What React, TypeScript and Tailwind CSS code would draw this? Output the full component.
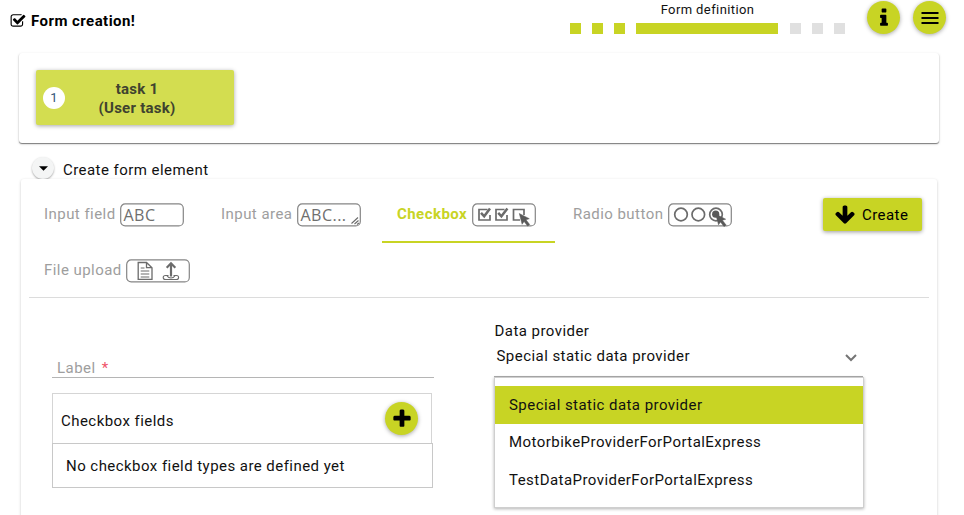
import type { ReactNode } from "react";

const PATHS = {
  check:
    "M1472 930v318q0 119-84.5 203.5t-203.5 84.5h-832q-119 0-203.5-84.5t-84.5-203.5v-832q0-119 84.5-203.5t203.5-84.5h832q63 0 117 25 15 7 18 23 3 17-9 29l-49 49q-10 10-23 10-3 0-9-2-23-6-45-6h-832q-66 0-113 47t-47 113v832q0 66 47 113t113 47h832q66 0 113-47t47-113v-254q0-13 9-22l64-64q10-10 23-10 6 0 12 3 20 8 20 29zm231-489l-814 814q-24 24-57 24t-57-24l-430-430q-24-24-24-57t24-57l110-110q24-24 57-24t57 24l263 263 647-647q24-24 57-24t57 24l110 110q24 24 24 57t-24 57z",
  plus: "M1600 736v192q0 40-28 68t-68 28h-416v416q0 40-28 68t-68 28h-192q-40 0-68-28t-28-68v-416h-416q-40 0-68-28t-28-68v-192q0-40 28-68t68-28h416v-416q0-40 28-68t68-28h192q40 0 68 28t28 68v416h416q40 0 68 28t28 68z",
  arrowDown:
    "M1675 832q0 53-37 90l-651 652q-39 37-91 37-53 0-90-37l-651-652q-38-36-38-90 0-53 38-91l74-75q39-37 91-37 53 0 90 37l294 294v-704q0-52 38-90t90-38h128q52 0 90 38t38 90v704l294-294q37-37 90-37 52 0 91 37l75 75q37 39 37 91z",
  info: "M1216 1344v128q0 26-19 45t-45 19h-512q-26 0-45-19t-19-45v-128q0-26 19-45t45-19h64v-384h-64q-26 0-45-19t-19-45v-128q0-26 19-45t45-19h384q26 0 45 19t19 45v576h64q26 0 45 19t19 45zm-128-1152v192q0 26-19 45t-45 19h-256q-26 0-45-19t-19-45v-192q0-26 19-45t45-19h256q26 0 45 19t19 45z",
};

function Glyph({ name, className }: { name: keyof typeof PATHS; className: string }) {
  return (
    <svg viewBox="0 0 1792 1792" fill="currentColor" className={className}>
      <path d={PATHS[name]} />
    </svg>
  );
}

function RoundButton({ children, className = "" }: { children: ReactNode; className?: string }) {
  return (
    <button
      className={`flex size-[33px] shrink-0 items-center justify-center rounded-full bg-[#c8d424] text-black shadow-[0_1px_4px_rgba(0,0,0,0.35)] ${className}`}
    >
      {children}
    </button>
  );
}

function Frame({ children }: { children?: ReactNode }) {
  return (
    <svg
      viewBox="0 0 64 24"
      fill="none"
      stroke="#6b6b6b"
      className="mt-px h-6 w-16 shrink-0"
      fontFamily="'Open Sans', 'Noto Sans', sans-serif"
    >
      <rect x="0.7" y="0.9" width="62.6" height="22" rx="4.5" strokeWidth="1.2" stroke="#858585" />
      {children}
    </svg>
  );
}

const CURSOR = "M0 0L10 5.2L6.7 6.3L10.4 11L8.3 12.6L4.8 7.9L2.8 10.8Z";

function InputIcon() {
  return (
    <Frame>
      <text x="3.5" y="17.8" fontSize="16.5" fill="#6f6f6f" stroke="none" textLength="32" lengthAdjust="spacingAndGlyphs">ABC</text>
    </Frame>
  );
}

function AreaIcon() {
  return (
    <Frame>
      <text x="3.5" y="17.8" fontSize="16.5" fill="#6f6f6f" stroke="none" textLength="46" lengthAdjust="spacingAndGlyphs">ABC...</text>
      <path d="M54.5 20.5L61 14.5M57.5 21L61.5 17.5M60 21.5L62 20" strokeWidth="1.1" />
    </Frame>
  );
}

function CheckboxIcon() {
  return (
    <Frame>
      <path d="M15.5 6.5H7V17H18V12M32.5 6.5H24V17H35V12M48 17H41.5V6.5H52V12" strokeWidth="1.7" />
      <path d="M9 9.8L12.2 13.3L18 5.5M26.2 9.8L29.4 13.3L35.4 5.5" strokeWidth="2.5" />
      <path d={CURSOR} transform="translate(47.3 10.5)" fill="#595959" stroke="#595959" strokeWidth="0.5" />
    </Frame>
  );
}

function RadioIcon() {
  return (
    <Frame>
      <circle cx="13" cy="11.5" r="6.3" strokeWidth="1.7" />
      <circle cx="30.3" cy="11.5" r="6.3" strokeWidth="1.7" />
      <circle cx="48" cy="11.5" r="6.3" strokeWidth="1.7" />
      <circle cx="47.7" cy="11.2" r="3.6" fill="#595959" stroke="none" />
      <path d={CURSOR} transform="translate(47.7 11)" fill="#595959" stroke="#595959" strokeWidth="0.5" />
    </Frame>
  );
}

function UploadIcon() {
  return (
    <Frame>
      <path d="M12.2 3.5H20.5L26 8.7V20.3H12.2ZM20.5 3.5V8.7H26" strokeWidth="1.3" />
      <path d="M14.7 9H18.5M14.7 12H23.3M14.7 15H23.3M14.7 18H23.3" strokeWidth="1.2" />
      <path d="M45 17.5V5.5M40.7 8.7L45 4.3L49.3 8.7" strokeWidth="2.2" />
      <path d="M42.5 16.5H39.5Q37.2 16.5 37.2 18.5Q37.2 20.5 39.5 20.5H50.5Q52.6 20.5 52.6 18.5Q52.6 16.5 50.5 16.5H47.5M41 16.7Q42.5 19 45 19Q47.5 19 49 16.7" strokeWidth="1.1" />
    </Frame>
  );
}

function Tab({ label, icon, active = false, className = "" }: { label: string; icon: ReactNode; active?: boolean; className?: string }) {
  return (
    <div
      className={`flex h-14 shrink-0 items-center border-b-2 whitespace-nowrap ${
        active ? "border-[#c8d424] font-bold text-[#c8d424]" : "border-transparent text-[#9e9e9e]"
      } ${className}`}
    >
      <span>{label}</span>
      {icon}
    </div>
  );
}

const options = ["Special static data provider", "MotorbikeProviderForPortalExpress", "TestDataProviderForPortalExpress"];

export default function App() {
  return (
    <div className="flex h-[515px] w-[964px] flex-col overflow-hidden bg-white font-['Roboto',sans-serif] text-[15px] leading-[19px] tracking-[0.45px] text-[#111]">
      <header className="flex h-[53px] shrink-0 items-start">
        <div className="flex w-[570px] items-center pt-3 pl-[10px] font-bold text-black">
          <Glyph name="check" className="mr-[5px] mb-px size-4" />
          Form creation!
        </div>
        <div className="flex w-[275px] flex-col items-center">
          <div className="h-[23px] text-[13px] tracking-[0.4px]">Form definition</div>
          <div className="flex w-full gap-[11px]">
            <i className="size-[11px] bg-[#c8d424]" />
            <i className="size-[11px] bg-[#c8d424]" />
            <i className="size-[11px] bg-[#c8d424]" />
            <i className="mr-px h-[11px] w-[142px] bg-[#c8d424]" />
            <i className="size-[11px] bg-[#e0e0e0]" />
            <i className="size-[11px] bg-[#e0e0e0]" />
            <i className="size-[11px] bg-[#e0e0e0]" />
          </div>
        </div>
        <div className="flex gap-[13px] pt-px pl-[22px]">
          <RoundButton>
            <Glyph name="info" className="size-[22px]" />
          </RoundButton>
          <RoundButton>
            <svg viewBox="0 0 18 12" className="h-3 w-[18px]" stroke="black" strokeWidth="1.8">
              <path d="M0.5 1H17.5M0.5 6H17.5M0.5 11H17.5" />
            </svg>
          </RoundButton>
        </div>
      </header>

      <section className="ml-[19px] h-[90px] w-[920px] shrink-0 rounded-[3px] bg-white pt-[17px] pl-[17px] shadow-[0_1px_1px_rgba(0,0,0,0.45),0_1px_3px_rgba(0,0,0,0.16)]">
        <div className="flex h-[55px] w-[198px] items-center rounded-[2px] bg-[#d3dd50] shadow-[0_1px_4px_rgba(0,0,0,0.35)]">
          <span className="ml-[7px] flex size-[22px] items-center justify-center rounded-full bg-white text-[13px] tracking-normal text-[#357]">1</span>
          <div className="mt-0.5 ml-[7px] w-[130px] text-center font-bold tracking-[0.25px] text-[#40432f]">
            task 1
            <br />
            (User task)
          </div>
        </div>
      </section>

      <div className="flex h-9 shrink-0 items-start pt-[14px] pl-8">
        <span className="flex size-[22px] items-center justify-center rounded-full bg-[#f4f5f5] shadow-[0_1px_2px_rgba(0,0,0,0.35)]">
          <svg viewBox="0 0 10 5" className="h-[5px] w-[9px]">
            <path d="M0 0H10L5 5Z" />
          </svg>
        </span>
        <span className="mt-1 ml-[9px]">Create form element</span>
      </div>

      <main className="ml-[21px] h-[400px] w-[916px] shrink-0 rounded-[3px] bg-white px-2 shadow-[0_1px_3px_rgba(0,0,0,0.22)]">
        <div className="flex h-[119px] items-start border-b border-[#dcdcdc] pt-2">
          <div className="flex w-[794px] flex-wrap">
            <Tab label="Input field" icon={<InputIcon />} className="w-[177px] gap-1 pl-[15px]" />
            <Tab label="Input area" icon={<AreaIcon />} className="w-[176px] gap-[5px] pl-[15px]" />
            <Tab label="Checkbox" icon={<CheckboxIcon />} active className="w-[173px] gap-[5px] pl-[15px]" />
            <Tab label="Radio button" icon={<RadioIcon />} className="ml-[3px] w-[190px] gap-[5px] pl-[15px]" />
            <Tab label="File upload" icon={<UploadIcon />} className="w-[190px] gap-1 pl-[15px]" />
          </div>
          <button className="mt-[11px] flex h-[33px] w-[99px] items-center rounded-[2px] bg-[#c8d424] pl-[11px] text-black shadow-[0_1px_4px_rgba(0,0,0,0.4)]">
            <Glyph name="arrowDown" className="mr-1.5 size-[22px]" />
            <span className="mt-0.5">Create</span>
          </button>
        </div>

        <div className="flex pl-[23px]">
          <div className="w-[442px] pt-[61px]">
            <div className="h-[19px] w-[382px] border-b border-[#b5b5b5] pl-[5px] text-[#9e9e9e]">
              Label <span className="ml-0.5 text-[#ef5369]">*</span>
            </div>
            <div className="mt-[15px] flex h-[50px] w-[380px] items-center justify-between border border-b-0 border-[#d5d5d5] pr-[13px] pl-2">
              <span className="mt-[5px]">Checkbox fields</span>
              <RoundButton>
                <Glyph name="plus" className="size-[22px]" />
              </RoundButton>
            </div>
            <div className="flex h-[45px] w-[381px] items-center border border-[#c8c8c8] pt-0.5 pl-[13px]">No checkbox field types are defined yet</div>
          </div>

          <div className="w-[371px] pt-6">
            <div className="h-[25px] pl-[0.5px]">Data provider</div>
            <div className="flex h-[30px] w-[369px] items-start justify-between border-b border-[#adadad] pr-1.5 pl-[2.5px]">
              <span>Special static data provider</span>
              <svg viewBox="0 0 12 8" className="mt-[7px] h-2 w-3" fill="none" stroke="#757575" strokeWidth="2">
                <path d="M1 1L6 6L11 1" />
              </svg>
            </div>
            <ul className="h-[131px] w-[370px] border border-[#cfcfcf] bg-white pt-2 shadow-[0_1px_3px_rgba(0,0,0,0.3)]">
              {options.map((option, i) => (
                <li key={option} className={`flex h-[37.5px] items-center pt-px pl-3.5 ${i === 0 ? "bg-[#c8d424]" : ""}`}>
                  {option}
                </li>
              ))}
            </ul>
          </div>
        </div>
      </main>
    </div>
  );
}
